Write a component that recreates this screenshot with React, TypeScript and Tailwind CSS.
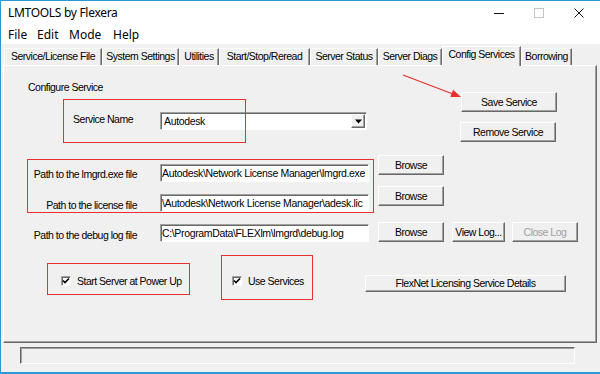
import type { ReactNode } from 'react';
import clsx from 'clsx';

// classic win32 3d frames
const raised = "bg-[#f0f0f0] border border-t-white border-l-white border-r-[#696969] border-b-[#696969] shadow-[inset_-1px_-1px_0_#a0a0a0]";
const sunken = "border border-t-[#a0a0a0] border-l-[#a0a0a0] border-r-white border-b-white shadow-[inset_1px_1px_0_#696969]";

const Btn = ({ children, className, disabled }: { children: ReactNode; className?: string; disabled?: boolean }) => (
    <div className={clsx(raised, "flex items-center justify-center whitespace-nowrap leading-[13px]", disabled ? "text-[#a0a0a0]" : "text-black", className)}>
        {children}
    </div>
);

// the path fields are scrolled to their end, so only the tail of the path shows
const Field = ({ value }: { value: string }) => (
    <div className={clsx(sunken, "bg-white w-[209px] h-[18px] flex items-center overflow-hidden whitespace-nowrap pl-[1px] leading-[13px] tracking-[-0.35px]")}>
        {value}
    </div>
);

const Check = () => (
    <div className={clsx(sunken, "w-[10px] h-[10px] bg-white shrink-0 flex items-center justify-center")}>
        <svg width="8" height="8" viewBox="0 0 8 8">
            <polyline points="1,3.5 3,5.5 7,1.5" fill="none" stroke="#000" strokeWidth="1.6" />
        </svg>
    </div>
);

const Tab = ({ label, w, active }: { label: string; w: string; active?: boolean }) => (
    <div className={clsx(
        "flex items-center justify-center whitespace-nowrap border-t border-l border-t-white border-l-white border-r border-r-[#696969] shadow-[inset_-1px_0_0_#a0a0a0] bg-[#f0f0f0]",
        active ? "h-[20px] relative top-px z-10 pb-[3px]" : "h-[17px]",
        w
    )}>
        {label}
    </div>
);

const PathRow = ({ label, value, className, labelTop, fieldTop, children }: { label: string; value: string; className: string; labelTop: string; fieldTop: string; children: ReactNode }) => (
    <div className={clsx("flex items-start", className)}>
        <div className={clsx("w-[133px] text-right leading-[13px] whitespace-nowrap", labelTop)}>{label}</div>
        <div className={clsx("ml-[23px]", fieldTop)}><Field value={value} /></div>
        {children}
    </div>
);

const App = () => {
    return (
        <div className="relative w-[600px] h-[374px] overflow-hidden bg-[#f0f0f0] flex flex-col text-black font-['Liberation_Sans',Arial,sans-serif] text-[10.5px] tracking-[-0.5px]">
            {/* title bar */}
            <div className="h-[24px] bg-white flex items-center justify-between pt-[2px]">
                <span className="ml-[8px] text-[12px] tracking-[-0.3px] font-['Noto_Sans',sans-serif]">LMTOOLS by Flexera</span>
                <div className="flex items-center h-full">
                    <div className="w-[40px] flex justify-center">
                        <svg width="10" height="10" viewBox="0 0 10 10"><line x1="0" y1="5.5" x2="10" y2="5.5" stroke="#111" strokeWidth="1" /></svg>
                    </div>
                    <div className="w-[40px] flex justify-center">
                        <svg width="10" height="10" viewBox="0 0 10 10"><rect x="0.5" y="0.5" width="9" height="9" fill="none" stroke="#c4c4c4" strokeWidth="1" /></svg>
                    </div>
                    <div className="w-[40px] flex justify-center mr-px">
                        <svg width="10" height="10" viewBox="0 0 10 10"><path d="M0.5 0.5 L9.5 9.5 M9.5 0.5 L0.5 9.5" stroke="#111" strokeWidth="1" /></svg>
                    </div>
                </div>
            </div>

            {/* menu */}
            <div className="h-[20px] bg-white flex items-center pl-[8px] pt-[1px] text-[12px] tracking-normal font-['Noto_Sans',sans-serif]">
                <span className="w-[29px]">File</span>
                <span className="w-[32px]">Edit</span>
                <span className="w-[44px]">Mode</span>
                <span>Help</span>
            </div>

            {/* tabs */}
            <div className="h-[21px] flex items-end pl-[4px] relative z-10">
                <Tab label="Service/License File" w="w-[98px]" />
                <Tab label="System Settings" w="w-[77px]" />
                <Tab label="Utilities" w="w-[40px]" />
                <Tab label="Start/Stop/Reread" w="w-[91px]" />
                <Tab label="Server Status" w="w-[68px]" />
                <Tab label="Server Diags" w="w-[64px]" />
                <Tab label="Config Services" w="w-[79px]" active />
                <Tab label="Borrowing" w="w-[51px]" />
            </div>

            {/* tab page */}
            <div className="ml-[3px] w-[594px] h-[278px] border-t border-l border-t-white border-l-white border-r border-b border-r-[#696969] border-b-[#696969] shadow-[inset_-1px_-1px_0_#a0a0a0]">
                <div className="flex items-start">
                    <div className="w-[363px]">
                        <div className="mt-[15px] ml-[24px] leading-[13px]">Configure Service</div>
                        <div className="mt-[18px] flex items-start h-[18px]">
                            <div className="w-[129px] text-right mt-[1px] leading-[13px]">Service Name</div>
                            <div className={clsx(sunken, "ml-[27px] w-[207px] h-[18px] bg-white flex items-center pl-[3px] pr-px tracking-[-0.35px]")}>
                                <span className="flex-1 leading-[13px]">Autodesk</span>
                                <div className={clsx(raised, "w-[14px] h-[14px] flex items-center justify-center")}>
                                    <svg width="7" height="5" viewBox="0 0 7 5"><polygon points="0,0.5 7,0.5 3.5,4.5" fill="#000" /></svg>
                                </div>
                            </div>
                        </div>
                    </div>
                    <div className="ml-[94px] mt-[26px]">
                        <Btn className="w-[96px] h-[20px]">Save Service</Btn>
                        <Btn className="w-[96px] h-[20px] mt-[10px] -ml-px">Remove Service</Btn>
                    </div>
                </div>

                <PathRow label="Path to the lmgrd.exe file" value="Autodesk\Network License Manager\lmgrd.exe" className="mt-[13px]" labelTop="mt-[13px]" fieldTop="mt-[9px]">
                    <Btn className="ml-[9px] w-[66px] h-[20px]">Browse</Btn>
                </PathRow>
                <PathRow label="Path to the license file" value="\Autodesk\Network License Manager\adesk.lic" className="mt-[4px]" labelTop="mt-[13px]" fieldTop="mt-[8px]">
                    <Btn className="ml-[9px] w-[66px] h-[20px]">Browse</Btn>
                </PathRow>
                <PathRow label="Path to the debug log file" value="C:\ProgramData\FLEXlm\lmgrd\debug.log" className="mt-[10px]" labelTop="mt-[7px]" fieldTop="mt-[2px]">
                    <Btn className="ml-[9px] w-[66px] h-[20px]">Browse</Btn>
                    <Btn className="ml-[8px] w-[53px] h-[20px]">View Log...</Btn>
                    <Btn className="ml-[7px] w-[66px] h-[20px]" disabled>Close Log</Btn>
                </PathRow>

                <div className="mt-[30px] flex items-center h-[18px]">
                    <div className="ml-[57px] w-[171px] flex items-center">
                        <Check />
                        <span className="ml-[6px] leading-[13px]">Start Server at Power Up</span>
                    </div>
                    <div className="w-[133px] flex items-center">
                        <Check />
                        <span className="ml-[6px] leading-[13px]">Use Services</span>
                    </div>
                    <Btn className="self-start mt-[3px] w-[201px] h-[17px]">FlexNet Licensing Service Details</Btn>
                </div>
            </div>

            {/* status bar */}
            <div className="mt-[4px] ml-[20px] w-[555px] h-[17px] border border-t-[#696969] border-l-[#696969] border-r-white border-b-white shadow-[inset_1px_1px_0_#a0a0a0]"></div>

            {/* annotations */}
            <div className="absolute left-[63px] top-[99px] w-[183px] h-[44px] border border-[#e8302e] pointer-events-none"></div>
            <div className="absolute left-[27px] top-[159px] w-[347px] h-[54px] border border-[#e8302e] pointer-events-none"></div>
            <div className="absolute left-[47px] top-[263px] w-[143px] h-[32px] border border-[#e8302e] pointer-events-none"></div>
            <div className="absolute left-[221px] top-[255px] w-[92px] h-[45px] border border-[#e8302e] pointer-events-none"></div>
            <svg className="absolute left-0 top-0 pointer-events-none" width="600" height="374">
                <line x1="403" y1="75" x2="453" y2="94" stroke="#e8302e" strokeWidth="1.3" />
                <polygon points="461,97 453.1,89.7 450.3,97.1" fill="#e8302e" />
            </svg>

            {/* window frame */}
            <div className="absolute left-0 top-0 w-[600px] h-px bg-[#2b98d6]"></div>
            <div className="absolute left-0 top-0 w-px h-[374px] bg-[#2b98d6]"></div>
            <div className="absolute left-0 bottom-0 w-[600px] h-[2px] bg-[#2b98d6]"></div>
        </div>
    )
}

export default App
